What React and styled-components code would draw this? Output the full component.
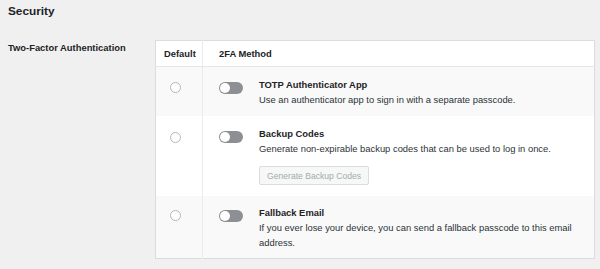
import React from 'react';
import styled, { createGlobalStyle } from 'styled-components';

const GlobalStyle = createGlobalStyle`
  body {
    margin: 0;
    background: #f0f0f1;
    font-family: "Liberation Sans", Arial, sans-serif;
    color: #1d2327;
  }
`;

const Page = styled.div`
  padding: 0 5px 0 8px;
`;

const Heading = styled.h2`
  margin: 0;
  padding-top: 3px;
  font-size: 11.8px;
  line-height: 16px;
  font-weight: 700;
`;

const FormRow = styled.div`
  display: flex;
  margin-top: 21px;
`;

const Label = styled.div`
  width: 147px;
  flex: none;
  padding-top: 1px;
  font-size: 9.4px;
  line-height: 14px;
  font-weight: 700;
`;

const Table = styled.table`
  width: 440px;
  table-layout: fixed;
  border-collapse: collapse;
  background: #fff;
  border: 1px solid #dcdcde;
  box-shadow: 0 1px 1px rgba(0, 0, 0, 0.03);
`;

const HeadCell = styled.th`
  text-align: left;
  font-size: 9.4px;
  font-weight: 700;
  height: 25px;
  padding: 0 0 0 ${(p) => p.$pad}px;
  border-bottom: 1px solid #e6e6e7;
  border-left: ${(p) => (p.$divider ? '1px solid #ebebec' : 'none')};
`;

const Row = styled.tr`
  background: ${(p) => (p.$alt ? '#f9f9f9' : '#fff')};
`;

const RadioCell = styled.td`
  vertical-align: top;
  padding: ${(p) => p.$top}px 0 0 14px;
`;

const MethodCell = styled.td`
  vertical-align: top;
  border-left: 1px solid #ebebec;
  padding: ${(p) => p.$top}px 10px ${(p) => p.$bottom}px 16px;
`;

const Radio = styled.span`
  display: block;
  width: 9px;
  height: 9px;
  border-radius: 50%;
  border: 1px solid #b4b6b9;
  background: #fff;
`;

const Method = styled.div`
  display: flex;
  gap: 16px;
`;

const Toggle = styled.span`
  flex: none;
  position: relative;
  width: 24px;
  height: 12px;
  margin-top: 4px;
  border-radius: 6px;
  background: #8c8f94;
  &::after {
    content: '';
    position: absolute;
    left: 1px;
    top: 1px;
    width: 10px;
    height: 10px;
    border-radius: 50%;
    background: #fff;
  }
`;

const Body = styled.div`
  flex: 1;
`;

const Title = styled.div`
  font-size: 9.4px;
  line-height: 14px;
  font-weight: 700;
  color: #1d2327;
`;

const Desc = styled.div`
  font-size: 9.4px;
  line-height: 15px;
  color: #2c3338;
`;

const Button = styled.button`
  display: block;
  margin-top: 10px;
  height: 19px;
  padding: 0 7px;
  font-family: inherit;
  font-size: 8.6px;
  color: #a7aaad;
  background: #f6f7f7;
  border: 1px solid #dcdcde;
  border-radius: 2px;
`;

const methods = [
  {
    title: 'TOTP Authenticator App',
    desc: 'Use an authenticator app to sign in with a separate passcode.',
    alt: true,
    top: 11,
    bottom: 9,
    radio: 15,
  },
  {
    title: 'Backup Codes',
    desc: 'Generate non-expirable backup codes that can be used to log in once.',
    button: 'Generate Backup Codes',
    top: 11,
    bottom: 11,
    radio: 16,
  },
  {
    title: 'Fallback Email',
    desc: 'If you ever lose your device, you can send a fallback passcode to this email address.',
    alt: true,
    top: 10,
    bottom: 8,
    radio: 14,
  },
];

export default function App() {
  return (
    <>
      <GlobalStyle />
      <Page>
        <Heading>Security</Heading>
        <FormRow>
          <Label>Two-Factor Authentication</Label>
          <Table>
            <colgroup>
              <col style={{ width: 47 }} />
              <col />
            </colgroup>
            <thead>
              <tr>
                <HeadCell $pad={8}>Default</HeadCell>
                <HeadCell $pad={16} $divider>2FA Method</HeadCell>
              </tr>
            </thead>
            <tbody>
              {methods.map((m) => (
                <Row key={m.title} $alt={m.alt}>
                  <RadioCell $top={m.radio}>
                    <Radio />
                  </RadioCell>
                  <MethodCell $top={m.top} $bottom={m.bottom}>
                    <Method>
                      <Toggle />
                      <Body>
                        <Title>{m.title}</Title>
                        <Desc>{m.desc}</Desc>
                        {m.button && <Button type="button">{m.button}</Button>}
                      </Body>
                    </Method>
                  </MethodCell>
                </Row>
              ))}
            </tbody>
          </Table>
        </FormRow>
      </Page>
    </>
  );
}
